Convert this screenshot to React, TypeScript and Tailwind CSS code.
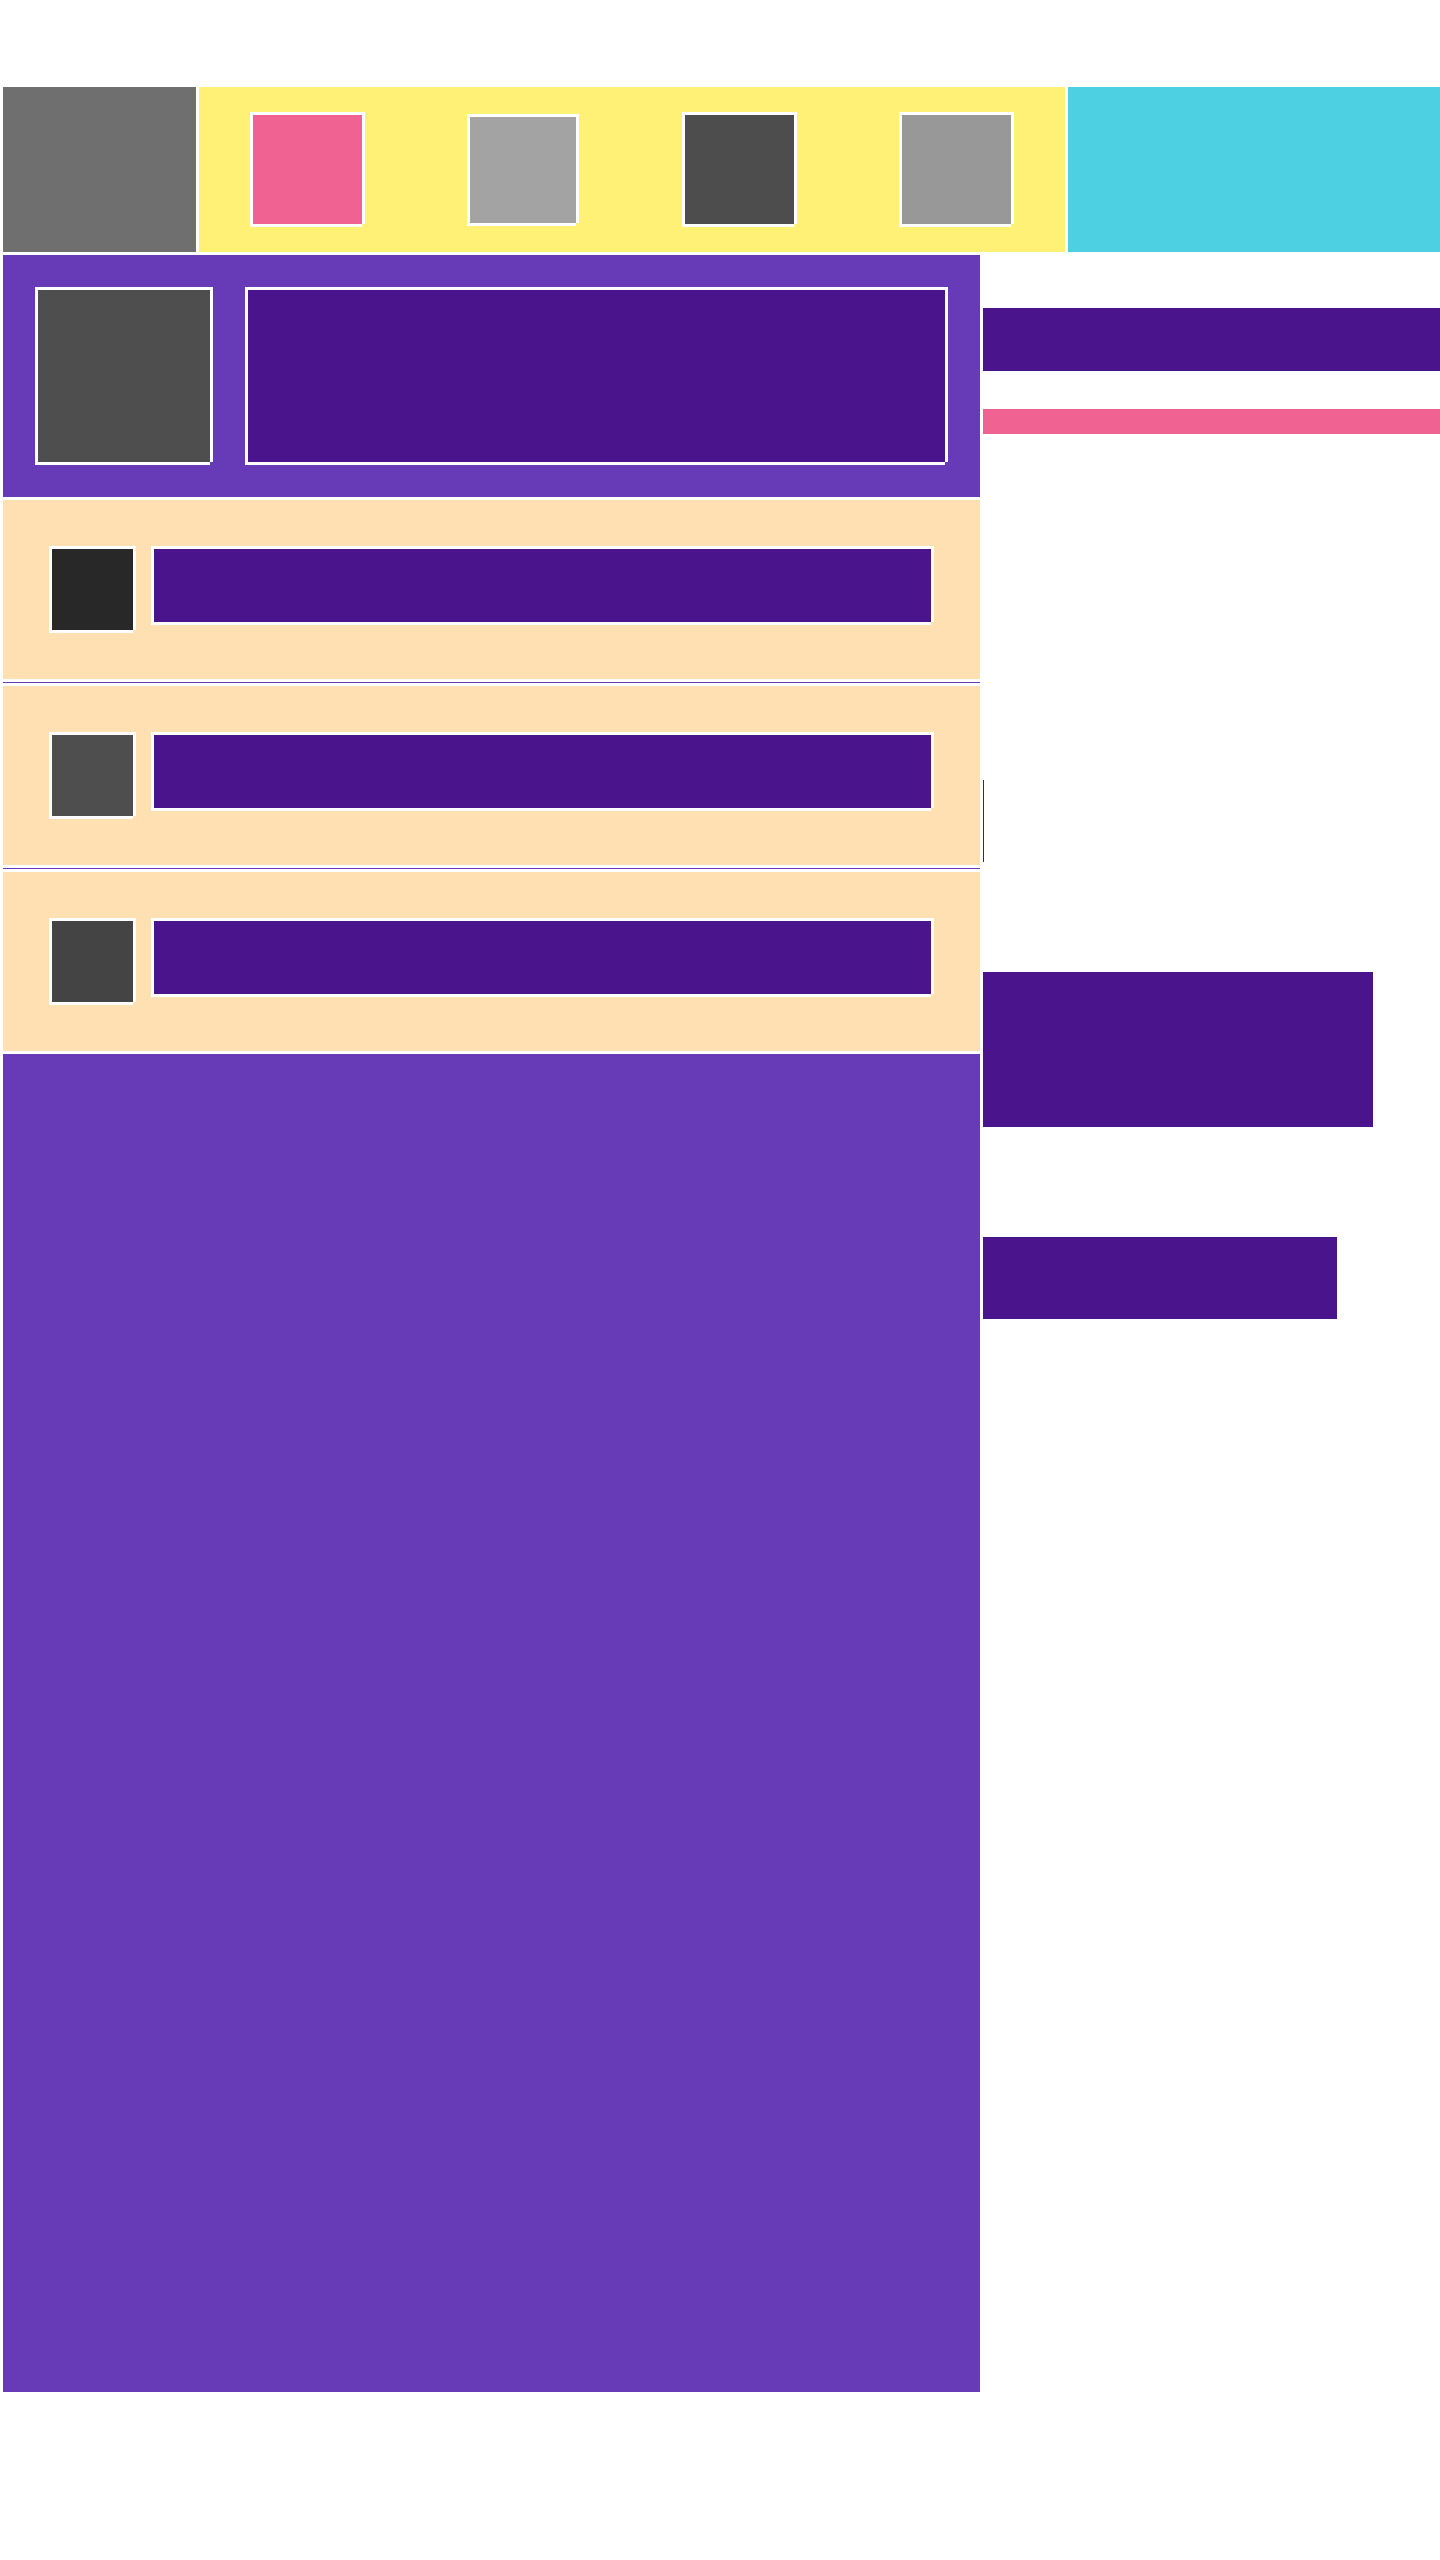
import React from "react";

// white frame with the bottom-right corner left open, like the reference
const frame =
    "m-[3px] shadow-[-3px_-3px_0_#fff,3px_-3px_0_#fff,-3px_3px_0_#fff,3px_0_0_#fff,0_3px_0_#fff]";

const tiles = [
    { id: "pink", className: "w-[109px] h-[109px] bg-[#f06292]" },
    { id: "light", className: "w-[106px] h-[106px] bg-[#a3a3a3]" },
    { id: "dark", className: "w-[109px] h-[109px] bg-[#4d4d4d]" },
    { id: "mid", className: "w-[109px] h-[109px] bg-[#989898]" },
];

const rows = [
    { id: 1, thumb: "bg-[#282828]" },
    { id: 2, thumb: "bg-[#4e4e4e]" },
    { id: 3, thumb: "bg-[#444444]" },
];

function Row({ thumb }: { thumb: string }) {
    return (
        <div className="h-[179px] bg-[#ffe0b2] p-[46px] flex items-start gap-[15px]">
            <div className={`${frame} w-[81px] h-[81px] shrink-0 ${thumb}`} />
            <div className={`${frame} flex-1 h-[73px] bg-[#4a148c]`} />
        </div>
    );
}

export default function App() {
    return (
        <div className="min-h-[2560px] bg-white pt-[87px] pl-[3px]">

            {/* Header */}
            <div className="flex gap-[3px] h-[165px]">
                <div className="w-[193px] bg-[#6f6f6f]" />
                <div className="w-[866px] bg-[#fff176] flex items-center justify-around">
                    {tiles.map((t) => (
                        <div key={t.id} className={`${frame} ${t.className}`} />
                    ))}
                </div>
                <div className="flex-1 bg-[#4dd0e1]" />
            </div>

            <div className="flex gap-[3px] mt-[3px]">

                {/* Main column */}
                <div className="w-[977px] flex flex-col gap-[3px]">
                    <div className="h-[242px] bg-[#673ab7] p-[32px] flex gap-[32px]">
                        <div className={`${frame} w-[172px] h-[172px] shrink-0 bg-[#4e4e4e]`} />
                        <div className={`${frame} flex-1 h-[172px] bg-[#4a148c]`} />
                    </div>

                    {rows.map((r, i) => (
                        <React.Fragment key={r.id}>
                            {i > 0 && <div className="h-px bg-[#673ab7]" />}
                            <Row thumb={r.thumb} />
                        </React.Fragment>
                    ))}

                    <div className="h-[1338px] bg-[#673ab7]" />
                </div>

                {/* Side column */}
                <div className="flex-1 flex flex-col">
                    <div className="mt-[53px] h-[63px] bg-[#4a148c]" />
                    <div className="mt-[38px] h-[25px] bg-[#f06292]" />
                    <div className="mt-[346px] w-px h-[82px] bg-[#4a148c]" />
                    <div className="mt-[110px] w-[390px] h-[155px] bg-[#4a148c]" />
                    <div className="mt-[110px] w-[354px] h-[82px] bg-[#4a148c]" />
                </div>
            </div>
        </div>
    );
}
